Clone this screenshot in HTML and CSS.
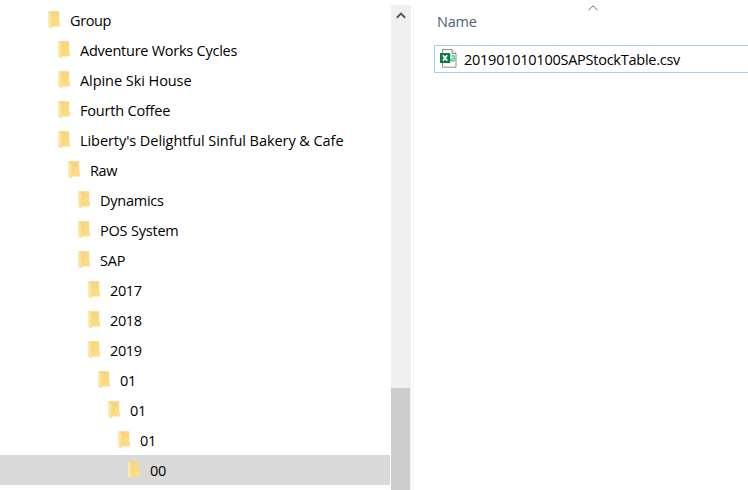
FILE: index.html
```
<!DOCTYPE html>
<html lang="en">
<head>
<meta charset="utf-8">
<title>Group</title>
<link rel="stylesheet" href="styles.css">
</head>
<body>
<svg class="defs" width="0" height="0">
  <defs>
    <linearGradient id="back" x1="0" y1="0" x2="1" y2="1"><stop offset="0" stop-color="#f3d077"/><stop offset="1" stop-color="#ffe187"/></linearGradient>
    <linearGradient id="flap" x1="0" y1="0" x2="1" y2="0"><stop offset="0" stop-color="#ffedb5"/><stop offset="1" stop-color="#f9dc8c"/></linearGradient>
    <symbol id="folder" viewBox="0 0 13 18">
      <path d="M.5.3h10.7v10.2l.8.8v4.2H.5z" fill="url(#back)"/>
      <path d="M0 .6 3.9 2.8v14.6L0 15.8z" fill="url(#flap)"/>
    </symbol>
  </defs>
</svg>
<div class="explorer">
  <ul class="tree">
    <li class="row l0"><svg class="folder"><use href="#folder"/></svg><span>Group</span></li>
    <li class="row l1"><svg class="folder"><use href="#folder"/></svg><span class="fit-a">Adventure Works Cycles</span></li>
    <li class="row l1"><svg class="folder"><use href="#folder"/></svg><span class="fit-c">Alpine Ski House</span></li>
    <li class="row l1"><svg class="folder"><use href="#folder"/></svg><span class="fit-b">Fourth Coffee</span></li>
    <li class="row l1"><svg class="folder"><use href="#folder"/></svg><span class="fit-c">Liberty's Delightful Sinful Bakery &amp; Cafe</span></li>
    <li class="row l2"><svg class="folder"><use href="#folder"/></svg><span>Raw</span></li>
    <li class="row l3"><svg class="folder"><use href="#folder"/></svg><span class="fit-a">Dynamics</span></li>
    <li class="row l3"><svg class="folder"><use href="#folder"/></svg><span class="fit-b">POS System</span></li>
    <li class="row l3"><svg class="folder"><use href="#folder"/></svg><span class="fit-b">SAP</span></li>
    <li class="row l4"><svg class="folder"><use href="#folder"/></svg><span>2017</span></li>
    <li class="row l4"><svg class="folder"><use href="#folder"/></svg><span>2018</span></li>
    <li class="row l4"><svg class="folder"><use href="#folder"/></svg><span>2019</span></li>
    <li class="row l5"><svg class="folder"><use href="#folder"/></svg><span>01</span></li>
    <li class="row l6"><svg class="folder"><use href="#folder"/></svg><span>01</span></li>
    <li class="row l7"><svg class="folder"><use href="#folder"/></svg><span>01</span></li>
    <li class="row l8 selected"><svg class="folder"><use href="#folder"/></svg><span>00</span></li>
  </ul>
  <div class="scrollbar">
    <svg class="up" viewBox="0 0 10 7"><path d="M.8 5.7 5 1.6l4.2 4.1" fill="none" stroke="#555" stroke-width="2"/></svg>
    <div class="thumb"></div>
  </div>
  <main class="files">
    <div class="header">
      <span>Name</span>
      <svg class="sort" viewBox="0 0 10 6"><path d="M.5 5.2 5 .8l4.5 4.4" fill="none" stroke="#686868" stroke-width="1"/></svg>
    </div>
    <div class="file">
      <svg class="csv" viewBox="0 0 18 19">
        <path d="M2.5.5h9.5l4 4v13.7H2.5z" fill="#fff" stroke="#8c8c8c"/>
        <path d="M12 .5v4h4" fill="#eee" stroke="#8c8c8c"/>
        <path d="M11.2 7.2q3.2-1.2 3.2 1.1v4M14.4 9.3c-4.3-.2-4.3 2.7-2.2 2.7q1.5 0 2.2-1" fill="none" stroke="#5fd396" stroke-width="1.6"/>
        <path d="M0 4h10.2v10H0z" fill="#107c41"/>
        <path d="m2.9 6.3 4.3 5.3M7.2 6.3l-4.3 5.3" stroke="#fff" stroke-width="1.7"/>
      </svg>
      <span>201901010100SAPStockTable.csv</span>
    </div>
  </main>
</div>
</body>
</html>
```
FILE: styles.css
```
* { box-sizing: border-box; }
body {
  margin: 0;
  background: #fff;
  color: #000;
  font: 14.5px/30px "Open Sans", "Noto Sans", sans-serif;
  overflow: hidden;
}
.defs { display: block; }
.explorer { display: flex; height: 490px; padding-top: 5px; }
.tree {
  width: 390px;
  margin: 0;
  padding: 0;
  list-style: none;
  letter-spacing: -0.4px;
}
.row {
  display: flex;
  align-items: center;
  gap: 9px;
  height: 30px;
  padding-left: calc(48px + var(--level) * 10px);
  white-space: nowrap;
}
.row span { padding-top: 2px; }
.fit-a { letter-spacing: -0.25px; }
.fit-b { letter-spacing: -0.2px; }
.fit-c { letter-spacing: -0.06px; }
.l0 { --level: 0; }
.l1 { --level: 1; }
.l2 { --level: 2; }
.l3 { --level: 3; }
.l4 { --level: 4; }
.l5 { --level: 5; }
.l6 { --level: 6; }
.l7 { --level: 7; }
.l8 { --level: 8; }
.selected { background: #d9d9d9; }
.folder { width: 13px; height: 18px; flex: none; }
.scrollbar {
  display: flex;
  flex-direction: column;
  justify-content: space-between;
  width: 20px;
  margin-left: 1px;
  background: #f0f0f0;
}
.up { width: 10px; height: 7px; margin: 7px 0 0 5px; }
.thumb { width: 19px; height: 102px; background: #cdcdcd; }
.files {
  flex: 1;
  margin-left: 2px;
  border-left: 1px solid #f4f4f4;
  padding-left: 20px;
}
.header {
  display: flex;
  height: 40px;
  padding-left: 3px;
  color: #4c607a;
  line-height: 34px;
  letter-spacing: -0.2px;
}
.header span { width: 151px; }
.sort { width: 10px; height: 6px; }
.file {
  display: flex;
  align-items: center;
  gap: 6px;
  height: 28px;
  padding-left: 5px;
  border: 1px solid #99d1ff;
  border-right: 0;
  letter-spacing: -0.25px;
  white-space: nowrap;
}
.file span { padding-top: 2px; }
.csv { width: 18px; height: 19px; margin-top: -2px; }
```
